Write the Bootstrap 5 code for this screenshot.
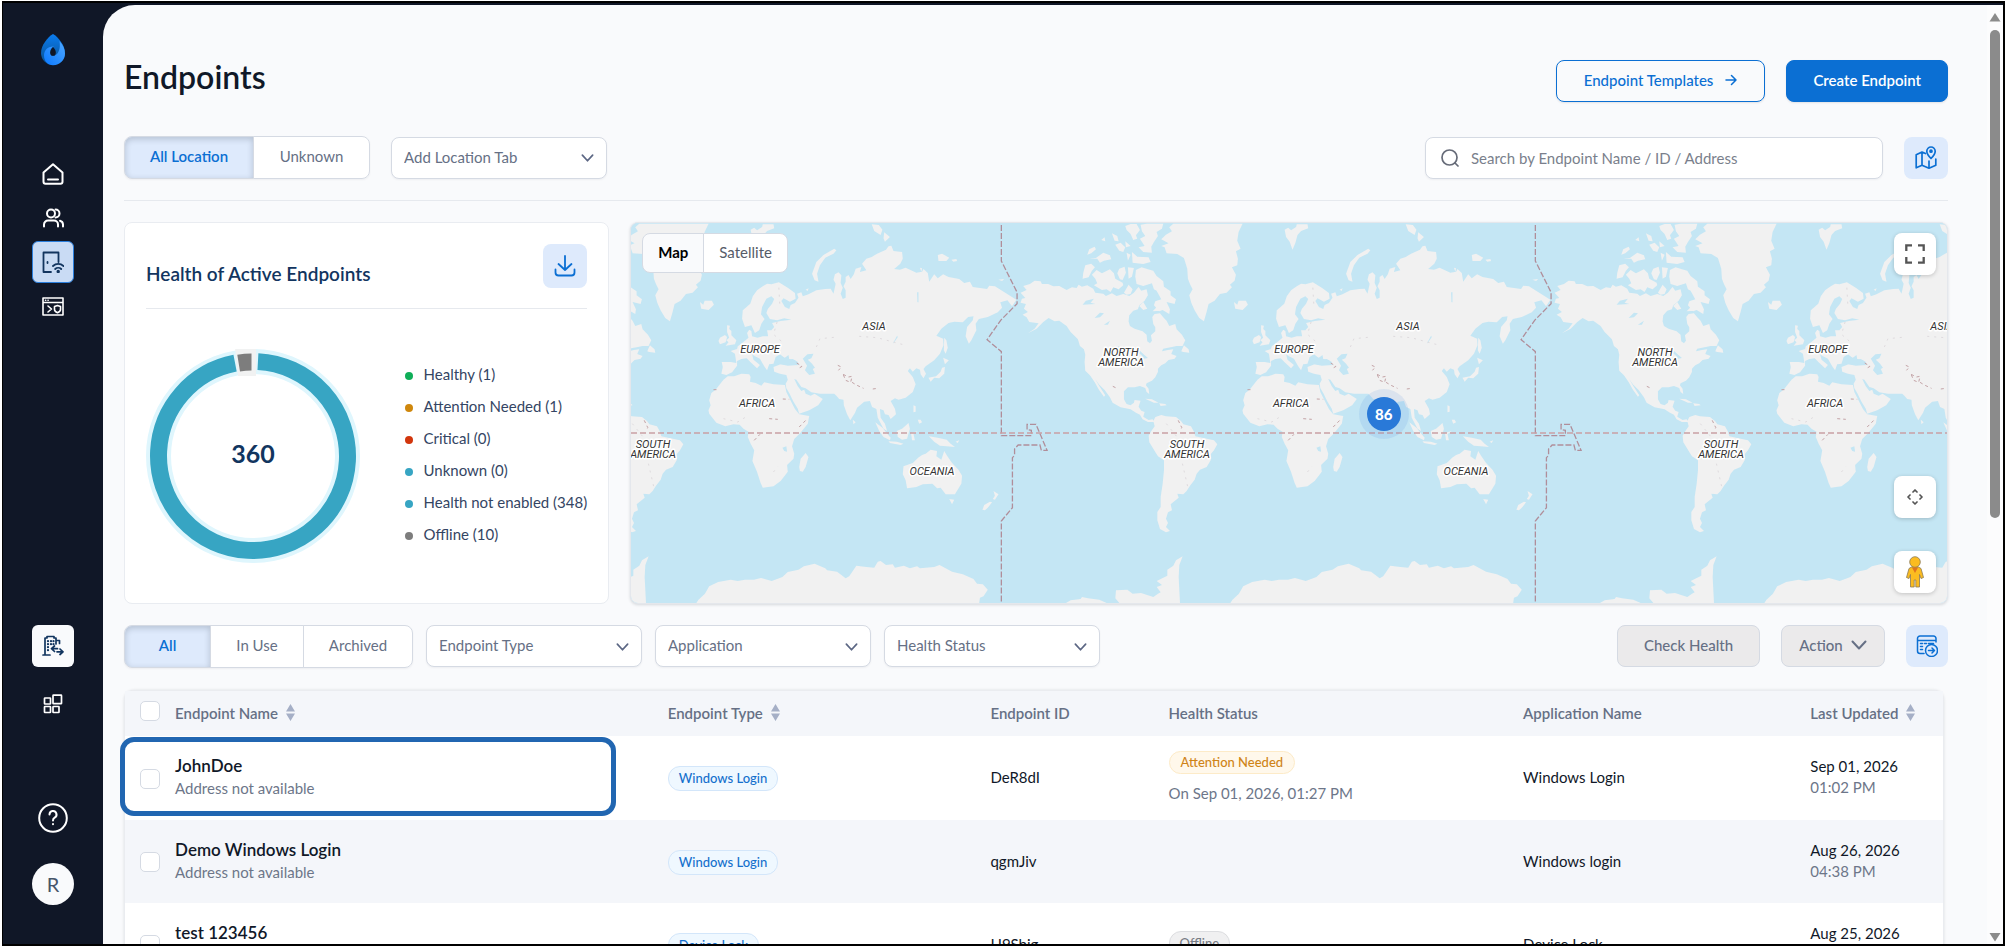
<!DOCTYPE html>
<html lang="en">
<head>
<meta charset="utf-8">
<meta name="viewport" content="width=device-width, initial-scale=1">
<title>Endpoints</title>
<link href="https://cdn.jsdelivr.net/npm/bootstrap@5.3.0/dist/css/bootstrap.min.css" rel="stylesheet">
<style>
  :root { --ink:#101828; --muted:#667085; --line:#d5dae3; --blue:#0b6fd3; --soft:#deeafc; --navy:#12355f; }
  body { font-family: Lato, "Liberation Sans", sans-serif; font-size: 15px; line-height: 20px; color: var(--ink); background: #fff; }
  .frame { height: 100vh; padding: 1px 1px 1px 2px; }
  .shell { border: 2px solid #000; background: #101727; border-left-width: 1px; }
  svg { display: block; flex: none; }
  .ico { fill: none; stroke: currentColor; stroke-width: 2; stroke-linecap: round; stroke-linejoin: round; }

  .side { width: 100px; padding: 31px 0 39px; color: #fff; }
  .side a { width: 42px; height: 42px; border-radius: 6px; color: #fff; display: flex; align-items: center; justify-content: center; }
  .side .here { background: #c9dbf4; border: 1px solid #2b7fdd; color: var(--navy); }
  .side .tile { background: #f9fafc; color: var(--navy); }
  .side .face { background: #f9fafc; border-radius: 50%; color: #475569; font-size: 20px; text-decoration: none; }
  .gap-nav { gap: 2px; margin-top: 87px; }

  .page { background: #f9fafc; border-top-left-radius: 32px; margin-top: 2px; min-width: 0; }
  .content { padding: 53px 39px 0 21px; min-width: 0; }
  .rail { width: 16px; background: #fcfcfd; padding: 7px 0 2px; }
  .rail .thumb { width: 10px; height: 488px; border-radius: 5px; background: #8b8b8b; margin-top: 8px; }
  h1 { font-size: 32px; line-height: 38px; font-weight: 600; }

  .btn { --bs-btn-font-size: 15px; --bs-btn-line-height: 20px; --bs-btn-border-radius: 8px; --bs-btn-font-weight: 500; white-space: nowrap; }
  .h42 { height: 42px; padding-top: 0; padding-bottom: 0; }
  .btn-line { border-color: var(--blue); color: var(--blue); padding: 0 27px 2px; gap: 12px; box-shadow: 0 1px 2px #1018281a; }
  .btn-full { background: var(--blue); border-color: var(--blue); color: #fff; padding: 0 26px 2px; font-weight: 600; box-shadow: 0 1px 2px #1018281a; }
  .btn-soft { background: var(--soft); color: var(--blue); padding: 0; width: 44px; display: flex; align-items: center; justify-content: center; }
  .btn-off, .btn-off:disabled { background: #ebeaeb; border-color: var(--line); color: #667085; opacity: 1; padding-bottom: 2px; }
  .seg { border-radius: 8px; box-shadow: 0 1px 2px #1018280d; }
  .seg .btn { background: #fff; border-color: var(--line); color: var(--muted); height: 43px; padding-top: 0; padding-bottom: 4px; font-weight: 400; }
  .seg .btn.on { background: var(--soft); color: var(--blue); font-weight: 600; box-shadow: inset 0 2px 6px #10182833; }
  .pick { width: 216px; height: 42px; font-size: 15px; line-height: 20px; padding: 0 40px 2px 12px; border-color: var(--line); border-radius: 8px; color: var(--muted); box-shadow: 0 1px 2px #1018280d;
    background-image: url("data:image/svg+xml,%3csvg xmlns='http://www.w3.org/2000/svg' viewBox='0 0 16 16'%3e%3cpath fill='none' stroke='%235c6784' stroke-width='1.8' stroke-linecap='round' stroke-linejoin='round' d='m2.5 5.5 5.5 6 5.5-6'/%3e%3c/svg%3e"); background-size: 15px 15px; background-position: right 11px center; }
  .find { width: 458px; height: 42px; background: #fff; border: 1px solid var(--line); border-radius: 8px; padding: 0 15px; color: #666b78; box-shadow: 0 1px 2px #1018280d; }
  .find input { font-size: 15px; line-height: 20px; }
  .find input::placeholder { color: #7a7f8c; }
  .rule { border-top: 1px solid #e6e9ee; }

  .panels { gap: 21px; }
  .health { flex: 0 0 26.6%; min-width: 440px; background: #fff; border: 1px solid #e9ecf1; border-radius: 8px; padding: 21px 21px 0; }
  .health h2 { font-size: 19px; line-height: 24px; font-weight: 600; color: var(--navy); }
  .legend { gap: 12px; font-size: 15px; color: #344563; }
  .legend li { gap: 11px; }
  .dot { width: 8px; height: 8px; border-radius: 50%; margin-top: 3px; }
  .mapbox { background: #c4e6f4; border-radius: 8px; height: 382px; box-shadow: 0 1px 3px #10182826; border: 1px solid #e4e7ec; min-width: 0; }
  .mapbox text { font-family: Roboto, "Liberation Sans", sans-serif; font-style: italic; font-size: 11px; fill: #333; text-anchor: middle; paint-order: stroke; stroke: #fff; stroke-width: 3px; stroke-linejoin: round; }
  .kind { top: 10px; left: 11px; }
  .kind .btn { background: #fff; border: 1px solid var(--line); height: 40px; padding: 0 15px 2px; color: #565c68; font-weight: 400; }
  .kind .btn.on { background: #f9fafc; color: #000; font-weight: 700; }
  .tools { top: 10px; right: 11px; bottom: 10px; width: 42px; }
  .tools .btn { width: 42px; height: 42px; padding: 0; background: #fff; border: 0; box-shadow: 0 1px 4px #0003; display: flex; align-items: center; justify-content: center; color: #555; }
  .pin { left: 57.2%; top: 50.3%; width: 34px; height: 34px; border-radius: 50%; background: #2979d8; color: #fff; border: 0; font-weight: 900; box-shadow: 0 0 0 8px #2979d81c; padding: 0; }

  .grid-card { margin-right: 4px; border: 1px solid #eaecf0; border-bottom: 0; border-radius: 10px 10px 0 0; box-shadow: 0 0 3px #1018281f; background: #fff; }
  .list { table-layout: fixed; width: 100%; }
  .list th { height: 45px; background: #f4f6fa; color: var(--muted); font-weight: 600; padding-bottom: 3px; }
  .list th .form-check-input { margin-bottom: 3px; }
  .list td { height: 83px; padding-bottom: 3px; }
  .list td:nth-child(1), .list td:nth-child(3) { padding-bottom: 0; }
  .list tbody tr:nth-child(even) td { background: #f4f6fa; }
  .list tbody tr:first-child td { height: 84px; }
  .list .form-check-input { width: 20px; height: 20px; border-radius: 5px; border-color: var(--line); margin: 0 0 0 14px; display: block; background-color: #fff; }
  .list thead .form-check-input { margin-bottom: 3px; }
  .nm { font-size: 17px; font-weight: 600; color: var(--ink); line-height: 22px; }
  .sub { color: #6d7689; line-height: 22px; }
  .pill { display: inline-block; font-size: 13px; line-height: 18px; font-weight: 500; border-radius: 12px; padding: 2px 10px 3px; border: 1px solid #d3e6fa; background: #eff8ff; color: #1570cd; }
  .pill.warm { background: #fff8eb; border-color: #fdebc8; color: #cf8416; padding: 1px 11px 2px; }
  .pill.cold { background: #f0f0f1; border-color: #dcdde0; color: #777b84; }
  .ring { left: -5px; top: 46px; width: 27.3%; height: 79px; border: 5px solid #2166b1; border-radius: 14px; pointer-events: none; }
</style>
</head>
<body>
<div class="frame">
<div class="shell d-flex h-100 overflow-hidden">

  <nav class="side d-flex flex-column align-items-center flex-shrink-0" aria-label="Main">
    <svg width="24" height="32" viewBox="0 0 24 32" aria-label="Logo">
      <defs>
        <linearGradient id="lg1" x1="0" y1="0" x2="0" y2="1"><stop offset="0" stop-color="#0a7cf0"/><stop offset="1" stop-color="#0a4f8c"/></linearGradient>
        <linearGradient id="lg2" x1="0" y1="1" x2="1" y2="0"><stop offset="0" stop-color="#0a78ff"/><stop offset="1" stop-color="#4fa8ff"/></linearGradient>
      </defs>
      <path fill="url(#lg1)" d="M12 0C17 3 24 11 24 19A12 12 0 0 1 0 19C0 11 7 3 12 0Z"/>
      <path fill="url(#lg2)" d="M18.500 7C22 11 24 15 24 19.500A12 11.700 0 0 1 12 31.200C7 31.200 3 27.500 3 21.500C3 16 7 12 13 12.500C8.500 14 8 21.500 12 22C17 21.500 20 15 18.500 7Z"/>
      <path fill="#101727" d="M12 13C14 15 14.800 16.800 14.800 18.400A2.800 3.400 0 0 1 9.200 18.400C9.200 16.800 10 15 12 13Z"/>
    </svg>
    <div class="d-flex flex-column gap-nav">
      <a href="#" aria-label="Home"><svg class="ico" width="22" height="22" viewBox="0 0 22 22"><path d="M1.500 9.500 11 1.200l9.500 8.300v9.300a2 2 0 0 1-2 2h-15a2 2 0 0 1-2-2zM6 16.500h10"/></svg></a>
      <a href="#" aria-label="Users"><svg class="ico" width="21" height="20" viewBox="0 0 21 20"><circle cx="8" cy="5.500" r="4"/><path d="M12.500 1.500a4 4 0 0 1 0 8M1 18.500v-2a4 4 0 0 1 4-4h6a4 4 0 0 1 4 4v2M17 12.800a4 4 0 0 1 3 3.700v2"/></svg></a>
      <a href="#" class="here" aria-label="Endpoints"><svg class="ico" width="22" height="22" viewBox="0 0 22 22" style="stroke-width:1.800"><path d="M9 21H1.500V1.500h15V11M5.500 11v1"/><path d="M11 15a7.500 7.500 0 0 1 10.500 0M13.200 18a4.300 4.300 0 0 1 6 0"/><circle cx="16.200" cy="20.500" r=".8"/></svg></a>
      <a href="#" aria-label="Console"><svg class="ico" width="22" height="19" viewBox="0 0 22 19" style="stroke-width:1.600"><path d="M1 1h20v17H1zM1 5.500h20M3.500 3.300h.2M6 3.300h.2M6 9l3.500 3L6 15M12.500 9.500l3-1 3 1v3c0 1.500-1.500 2.600-3 3.200-1.500-.6-3-1.700-3-3.200z"/></svg></a>
    </div>
    <div class="mt-auto d-flex flex-column">
      <a href="#" class="tile" aria-label="Switch organisation"><svg class="ico" width="22" height="22" viewBox="0 0 22 22" style="stroke-width:1.700"><path d="M3 20V3h2V1.500h7V3h2v6M1 20h7M14 5.500h3.500v3"/><path d="M6 6v.2M9 6v.2M11.500 6v.2M6 9v.2M9 9v.2M11.500 9v.2M6 12v.2M6 15v.2" stroke-width="2.200"/><path d="m12.500 11-3 2.700 3 2.800M10 13.700h5.500M18 14l3 2.800-3 2.700M20.500 16.800H15"/></svg></a>
      <a href="#" class="mt-3" aria-label="Apps"><svg class="ico" width="20" height="20" viewBox="0 0 20 20" style="stroke-width:1.700"><rect x="1.500" y="4" width="6" height="6" rx=".5"/><rect x="1.500" y="12.500" width="6" height="6" rx=".5"/><rect x="10" y="12.500" width="6" height="6" rx=".5"/><rect x="10" y="1.200" width="8.500" height="8.500" rx=".5"/></svg></a>
      <a href="#" style="margin-top:72px" aria-label="Help"><svg class="ico" width="30" height="30" viewBox="0 0 30 30"><circle cx="15" cy="15" r="13.800"/><path d="M11.500 11.500a3.500 3.500 0 1 1 5.200 3.100c-1.200.7-1.700 1.300-1.700 2.900M15 21v.3"/></svg></a>
      <a href="#" class="face mt-4">R</a>
    </div>
  </nav>

  <div class="page d-flex flex-grow-1 overflow-hidden">
  <main class="content flex-grow-1">
    <div class="d-flex justify-content-between">
      <h1 class="mb-0">Endpoints</h1>
      <div class="d-flex" style="gap:21px;margin-top:2px">
        <button class="btn btn-line h42 d-flex align-items-center">Endpoint Templates
          <svg class="ico" width="12" height="12" viewBox="0 0 12 12" style="stroke-width:1.500"><path d="M1 6h10M6.500 1.500 11 6l-4.500 4.500"/></svg></button>
        <button class="btn btn-full h42">Create Endpoint</button>
      </div>
    </div>

    <div class="d-flex align-items-center" style="margin-top:34px">
      <div class="btn-group seg" role="group" aria-label="Location">
        <button class="btn on" style="width:130px">All Location</button>
        <button class="btn" style="width:117px">Unknown</button>
      </div>
      <select class="form-select pick" style="margin-left:21px" aria-label="Add Location Tab"><option>Add Location Tab</option></select>
      <label class="find d-flex align-items-center ms-auto">
        <svg class="ico" width="18" height="18" viewBox="0 0 18 18" style="stroke-width:1.700"><circle cx="8.500" cy="8.500" r="7.500"/><path d="m14 14 3 3"/></svg>
        <input type="search" class="border-0 bg-transparent flex-grow-1 ms-2 p-0 ps-1" placeholder="Search by Endpoint Name / ID / Address" aria-label="Search">
      </label>
      <button class="btn btn-soft h42" style="margin-left:21px" aria-label="Toggle map"><svg class="ico" width="22" height="24" viewBox="0 0 22 24" style="stroke-width:1.700"><path d="M10.500 7.500 7 6 1.200 8.800v13l5.800-2.600 7 3 6.800-3V13M7 6.200v13M14 15v7"/><path d="M16 1a4.200 4.200 0 0 1 4.200 4.200c0 3-4.200 7.300-4.200 7.300s-4.200-4.300-4.200-7.300A4.200 4.200 0 0 1 16 1z"/><circle cx="16" cy="5.200" r="1"/></svg></button>
    </div>
    <div class="rule" style="margin-top:21px"></div>

    <div class="panels d-flex" style="margin-top:21px">
      <section class="health d-flex flex-column">
        <div class="d-flex justify-content-between align-items-center" style="padding-bottom:20px">
          <h2 class="mb-0 pt-3">Health of Active Endpoints</h2>
          <button class="btn btn-soft" style="height:44px" aria-label="Download"><svg class="ico" width="22" height="22" viewBox="0 0 22 22" style="stroke-width:1.800"><path d="M11 1v14M4.500 9l6.500 6 6.500-6M1.500 14.500v3a3 3 0 0 0 3 3h13a3 3 0 0 0 3-3v-3"/></svg></button>
        </div>
        <div class="rule"></div>
        <div class="d-flex align-items-center justify-content-between" style="margin-top:40px">
          <svg width="214" height="214" viewBox="-107 -107 214 214" role="img" aria-label="360 endpoints">
            <circle r="94.500" fill="none" stroke="#dff6fd" stroke-width="25"/>
            <path d="M-18-108H3V-80H-15Z" fill="#f1f2f2"/>
            <circle r="94.500" fill="none" stroke="#37a5c3" stroke-width="17" pathLength="360" stroke-dasharray="346 14" transform="rotate(-87)"/>
            <path d="M-15.700-101.300A102.500 102.500 0 0 1-1.500-102.500V-85.500A85.500 85.500 0 0 0-13-84.500Z" fill="#7d7d7d"/>
            <text y="7" text-anchor="middle" font-size="25" font-weight="700" fill="#12355f">360</text>
          </svg>
          <ul class="legend list-unstyled d-flex flex-column mb-1">
            <li class="d-flex align-items-center"><span class="dot" style="background:#0fae58"></span>Healthy (1)</li>
            <li class="d-flex align-items-center"><span class="dot" style="background:#cf870c"></span>Attention Needed (1)</li>
            <li class="d-flex align-items-center"><span class="dot" style="background:#d2360c"></span>Critical (0)</li>
            <li class="d-flex align-items-center"><span class="dot" style="background:#37a5c3"></span>Unknown (0)</li>
            <li class="d-flex align-items-center"><span class="dot" style="background:#37a5c3"></span>Health not enabled (348)</li>
            <li class="d-flex align-items-center"><span class="dot" style="background:#7d7d7d"></span>Offline (10)</li>
          </ul>
        </div>
      </section>

      <section class="mapbox flex-grow-1 position-relative overflow-hidden">
        <svg class="w-100 h-100" viewBox="0 0 1316 380" preserveAspectRatio="xMinYMid slice" role="img" aria-label="World map">
          <defs>
            <g id="world">
              <g transform="scale(.35714 .33333) translate(-31 -38)">
                <g fill="#f1f1f1">
                  <path d="M285 455 L310 455 L326 458 L322 430 L310 422 L328 416 L330 408 L345 396 L360 382 L356 368 L362 358 L368 362 L370 378 L385 382 L400 378 L415 378 L412 360 L424 360 L432 350 L426 338 L450 332 L480 328 L460 324 L440 330 L420 326 L410 308 L414 296 L426 280 L432 266 L424 258 L410 265 L398 290 L395 312 L405 326 L396 340 L390 360 L378 368 L368 345 L350 350 L342 325 L344 300 L365 280 L372 258 L384 240 L400 228 L412 220 L424 222 L445 216 L470 232 L490 248 L492 265 L476 274 L458 264 L452 272 L462 290 L474 296 L478 284 L490 278 L500 262 L496 250 L508 246 L512 258 L528 252 L550 240 L575 236 L590 235 L598 250 L604 220 L598 208 L602 192 L612 186 L620 195 L618 218 L624 232 L618 250 L624 266 L632 262 L632 240 L626 228 L632 214 L632 200 L640 194 L646 206 L655 192 L660 175 L676 170 L672 185 L690 180 L678 160 L690 145 L705 140 L720 130 L745 118 L752 108 L760 106 L766 122 L790 125 L792 145 L785 160 L768 176 L784 178 L800 172 L830 187 L846 184 L850 176 L862 188 L866 214 L880 192 L890 204 L905 192 L920 200 L950 206 L964 218 L980 214 L988 230 L1028 236 L1034 226 L1050 228 L1080 248 L1110 268 L1098 288 L1085 270 L1065 276 L1070 292 L1058 306 L1030 320 L1005 326 L996 340 L998 360 L984 390 L977 400 L968 378 L972 350 L988 330 L990 318 L975 320 L960 336 L936 334 L920 338 L900 355 L886 376 L905 385 L906 405 L896 430 L880 450 L866 460 L856 468 L850 476 L857 490 L850 504 L842 492 L840 478 L830 474 L820 484 L812 474 L806 482 L820 500 L828 522 L820 545 L800 562 L780 568 L770 564 L758 572 L770 595 L773 612 L758 626 L752 614 L742 612 L738 600 L728 596 L730 622 L742 640 L748 662 L738 655 L722 622 L718 596 L706 590 L700 572 L684 574 L664 592 L658 608 L645 630 L636 612 L627 585 L626 568 L614 566 L606 556 L600 550 L560 550 L536 546 L520 534 L508 530 L494 508 L488 506 L498 528 L508 542 L516 538 L520 550 L534 556 L545 550 L568 566 L555 585 L530 600 L502 610 L498 595 L486 574 L474 548 L466 534 L464 520 L470 508 L466 494 L448 490 L432 484 L430 470 L450 462 L470 466 L500 464 L498 455 L484 446 L470 448 L458 440 L448 432 L436 440 L430 460 L418 462 L412 480 L404 468 L392 445 L378 438 L370 432 L374 448 L392 464 L384 474 L366 456 L355 444 L340 446 L328 452 L328 466 L314 486 L298 494 L284 490 L288 470 Z"/>
                  <path d="M290 508 L302 498 L320 498 L340 490 L362 492 L366 500 L364 514 L380 518 L396 526 L404 516 L430 522 L462 524 L466 545 L480 575 L490 596 L502 612 L530 617 L526 640 L505 668 L488 686 L482 708 L488 730 L486 745 L468 764 L470 784 L450 812 L430 828 L400 832 L394 818 L384 785 L371 752 L376 720 L366 700 L358 680 L360 664 L346 655 L335 643 L318 642 L295 648 L270 637 L250 610 L248 600 L254 585 L250 570 L256 548 L268 538 L280 522Z"/>
                  <path d="M502 770 L506 745 L520 728 L528 740 L520 770 L512 784 L504 782Z M715 636 L735 652 L758 682 L756 690 L738 680 L726 662Z M752 693 L775 694 L794 700 L786 704 L756 698Z M775 662 L790 655 L808 638 L812 655 L804 685 L790 688 L778 680Z M822 585 L828 588 L828 604 L822 606Z M834 628 L842 628 L846 636 L838 640Z M815 668 L834 662 L822 672 L826 690 L818 690Z M865 678 L890 682 L915 688 L926 700 L938 710 L915 708 L896 706 L880 694Z M940 694 L950 690 L946 698Z"/>
                  <path d="M794 768 L820 758 L835 742 L846 734 L856 730 L870 718 L888 722 L886 738 L900 748 L908 722 L916 736 L930 758 L948 778 L958 796 L956 820 L938 852 L912 852 L898 832 L888 834 L875 820 L848 822 L830 830 L804 834 L800 810 L792 792Z M922 866 L936 868 L930 882Z M1046 842 L1060 852 L1050 868 L1044 866 L1050 856Z M1015 898 L1020 884 L1036 874 L1042 876 L1030 892 L1022 900Z"/>
                  <path d="M864 502 L885 498 L898 484 L902 472 L910 470 L908 490 L894 504 L880 502 L870 514Z M905 442 L921 450 L910 462Z M908 382 L914 390 L918 412 L912 430 L907 420Z"/>
                  <path d="M300 345 L308 346 L306 356 L312 362 L312 375 L326 390 L322 402 L296 406 L304 396 L298 390 L306 382 L300 365Z M280 382 L294 374 L300 380 L296 396 L280 402 L276 392Z"/>
                  <path d="M545 210 L538 190 L550 155 L570 134 L600 115 L606 120 L598 130 L575 142 L560 165 L552 190 L556 214Z M366 58 L376 52 L384 60 L398 50 L400 42 L430 42 L432 54 L412 62 L402 74 L396 98 L388 118 L380 94 L370 80Z M705 42 L725 44 L735 58 L730 74 L712 62Z M740 66 L756 80 L742 94 L738 84Z M890 134 L902 130 L922 142 L914 152 L892 152Z M928 148 L942 146 L944 152 L934 154Z M1060 208 L1076 206 L1070 212Z M840 172 L846 174 L844 184Z M652 628 L660 636 L654 642Z M520 238 L528 234 L526 242Z"/>
                  <path d="M214 1178 L220 1168 L238 1150 L250 1128 L275 1115 L310 1108 L330 1112 L350 1108 L375 1108 L395 1103 L425 1112 L455 1100 L470 1085 L500 1078 L515 1068 L545 1060 L575 1074 L580 1080 L608 1084 L632 1104 L642 1098 L662 1066 L690 1070 L712 1072 L722 1054 L730 1052 L745 1064 L764 1062 L770 1072 L795 1066 L812 1074 L832 1068 L840 1074 L880 1070 L895 1064 L930 1084 L960 1092 L990 1106 L1000 1120 L1016 1122 L1030 1138 L1018 1158 L1008 1162 L1006 1178Z"/>
                </g>
                <g fill="#c4e6f4">
                  <path d="M512 445 L525 432 L542 430 L536 444 L526 448 L538 460 L546 472 L540 476 L546 490 L530 494 L518 480 L524 466Z M440 460 L436 448 L448 436 L460 444 L472 434 L474 446 L490 450 L500 462 L470 464Z M764 400 L776 376 L778 380 L768 396Z M832 246 L836 246 L836 276 L833 276Z M455 712 L466 708 L468 724 L460 722Z"/>
                </g>
                <g transform="translate(1064 15) scale(.93333 1)">
                  <path fill="#f1f1f1" d="M62 232 L80 224 L70 212 L90 206 L104 196 L122 198 L126 206 L145 206 L160 213 L178 212 L200 224 L216 216 L230 218 L236 208 L246 214 L262 210 L280 220 L286 232 L310 235 L318 242 L336 234 L350 242 L370 236 L388 242 L402 232 L410 222 L416 215 L424 226 L440 222 L444 240 L434 256 L418 270 L414 282 L400 286 L388 300 L386 318 L390 332 L404 340 L428 348 L440 358 L442 378 L450 384 L456 376 L453 360 L466 348 L466 336 L460 326 L457 305 L464 296 L480 294 L490 306 L500 316 L508 332 L526 326 L530 342 L546 358 L556 375 L548 392 L530 392 L512 396 L490 400 L486 408 L504 404 L520 402 L514 416 L530 422 L524 430 L506 434 L496 444 L484 450 L474 460 L474 470 L466 486 L456 496 L440 504 L438 510 L446 520 L448 536 L440 530 L436 518 L420 512 L404 516 L384 516 L372 528 L372 552 L380 566 L392 570 L402 562 L404 554 L422 556 L416 574 L424 586 L434 590 L430 604 L446 614 L458 612 L464 620 L444 620 L428 612 L420 598 L408 592 L392 582 L362 576 L338 562 L330 546 L314 524 L298 508 L286 492 L298 512 L316 540 L312 544 L296 522 L284 500 L270 480 L256 466 L254 440 L256 418 L252 402 L240 392 L234 372 L212 350 L200 332 L178 316 L164 318 L146 308 L130 320 L110 340 L84 354 L104 340 L116 324 L88 320 L80 306 L68 298 L84 290 L72 280 L78 266 L62 262 L66 250 L76 248Z
                    M256 150 L274 145 L285 156 L276 166 L266 186 L248 190 L250 172Z M276 178 L290 164 L306 174 L330 162 L342 174 L346 190 L368 202 L370 210 L356 222 L340 216 L332 230 L320 222 L306 224 L282 210 L292 204 L286 190Z M262 118 L268 102 L284 94 L288 102 L274 114Z M268 130 L288 128 L310 112 L330 120 L334 132 L312 136 L300 142 L292 130Z M304 74 L314 66 L316 78Z M336 54 L352 62 L356 78 L344 76Z M346 88 L362 82 L376 96 L370 110 L358 106Z M376 78 L392 92 L378 96Z M380 112 L392 118 L384 136Z M376 32 L392 26 L410 26 L420 44 L408 60 L412 70 L400 74 L392 56 L380 44Z M422 28 L440 25 L490 25 L486 40 L470 50 L474 62 L462 80 L454 94 L456 112 L430 110 L416 96 L434 92 L420 70 L436 62 L426 48Z M396 110 L412 124 L446 126 L452 140 L430 146 L398 142Z M358 160 L374 154 L378 172 L368 194 L360 192 L352 174Z M384 156 L402 158 L396 184 L386 190Z M372 232 L386 208 L398 222 L392 236 L380 238Z M408 164 L425 156 L444 162 L460 166 L470 182 L490 198 L492 214 L512 228 L512 240 L528 252 L524 266 L500 260 L510 282 L508 296 L488 284 L478 288 L462 270 L466 258 L484 252 L470 226 L462 222 L456 204 L430 212 L410 206 L406 184Z M418 272 L430 260 L442 280 L430 284Z M458 288 L470 276 L480 286Z
                    M520 25 L728 25 L716 50 L712 76 L722 100 L708 108 L714 130 L712 150 L696 156 L708 178 L704 196 L690 208 L696 216 L680 232 L660 236 L644 256 L626 266 L620 290 L612 318 L598 308 L584 285 L574 262 L568 240 L578 222 L570 206 L564 190 L562 160 L552 128 L532 116 L500 114 L494 96 L484 92 L506 84 L484 72 L498 58 L516 48 L508 36Z
                    M702 260 L712 268 L716 256 L738 256 L744 268 L728 284 L706 280Z M544 408 L552 390 L566 402 L568 412 L550 410Z M436 550 L456 552 L476 562 L462 562Z M478 564 L496 566 L500 570 L482 572Z"/>
                  <path fill="#c4e6f4" d="M248 268 L258 256 L282 250 L272 262 L286 266Z M284 308 L300 292 L312 294 L300 306Z M312 328 L330 316 L324 328Z M412 412 L420 406 L430 416 L444 428 L432 430 L424 418Z M354 392 L360 394 L360 408Z"/>
                </g>
                <g transform="translate(1249 0) scale(.93333 1)">
                  <path fill="#f1f1f1" d="M262 632 L268 620 L286 614 L300 618 L330 620 L345 632 L352 642 L375 648 L384 664 L388 678 L408 682 L444 690 L454 702 L444 720 L434 732 L434 750 L422 770 L402 778 L392 790 L386 808 L372 826 L362 842 L352 852 L334 850 L338 862 L314 882 L318 900 L306 906 L300 925 L306 938 L300 950 L312 962 L300 966 L282 956 L274 930 L274 905 L284 890 L284 860 L290 820 L294 780 L294 750 L276 738 L266 722 L250 696 L248 676 L256 662 L266 648Z
                    M0 1178 L14 1170 L44 1166 L48 1160 L66 1164 L100 1168 L122 1178Z M160 1178 L148 1164 L150 1140 L184 1138 L200 1150 L225 1148 L262 1160 L276 1150 L284 1146 L272 1130 L288 1124 L272 1112 L304 1096 L304 1078 L322 1066 L330 1050 L350 1038 L340 1064 L338 1100 L342 1178Z"/>
                </g>
                <g fill="none" stroke="#c3a3a6" stroke-width="1" stroke-dasharray="3 3">
                  <path vector-effect="non-scaling-stroke" d="M610 465 L620 470 L612 480 M625 492 L640 500 L650 498 L646 516 L632 510Z M650 516 L662 524 L682 534 M708 536 L722 534 M495 458 L510 468 L500 474 M456 566 L474 567 M418 625 L442 627 M502 650 L524 626 M68 630 L78 652 L74 660 M376 690 L392 672 M262 538 L278 538 M1380 528 L1392 534"/>
                </g>
                <g fill="none" stroke="#dfdbde" stroke-width="1" stroke-dasharray="2 5">
                  <path vector-effect="non-scaling-stroke" d="M445 232 L448 290 M440 335 L430 372 L460 400 M550 410 L560 385 L610 380 M670 378 L720 382 L800 405 M290 625 L330 635 L360 615 M1530 640 L1560 680 M1575 760 L1590 830 M430 785 L442 768"/>
                </g>
                <path vector-effect="non-scaling-stroke" fill="none" stroke="#b08e9a" stroke-width="1.300" stroke-dasharray="6 2" d="M1068 44 V152 L1112 246 V280 L1066 330 L1028 388 L1068 424 V676 H1152 V660 L1140 658 V642 H1165 L1196 720 H1180 L1176 704 H1115 L1105 716 V735 L1099 742 V892 L1068 932 V1178"/>
              </g>
              <text x="243" y="107">ASIA</text>
              <text x="129" y="130">EUROPE</text>
              <text x="126" y="184">AFRICA</text>
              <text x="301" y="252">OCEANIA</text>
              <text x="490" y="133">NORTH</text><text x="490" y="143">AMERICA</text>
              <text x="556" y="225">SOUTH</text><text x="556" y="235">AMERICA</text>
            </g>
          </defs>
          <rect width="1316" height="380" fill="#c4e6f4"/>
          <use href="#world" x="-534"/>
          <use href="#world"/>
          <use href="#world" x="534"/>
          <use href="#world" x="1068"/>
          <path d="M0 210H1316" stroke="#c9a0a4" stroke-width="1.500" stroke-dasharray="6 3"/>
        </svg>
        <button class="pin position-absolute translate-middle">86</button>
        <div class="btn-group kind position-absolute" role="group" aria-label="Map type">
          <button class="btn on">Map</button>
          <button class="btn">Satellite</button>
        </div>
        <div class="tools position-absolute d-flex flex-column">
          <button class="btn mb-auto" aria-label="Full screen"><svg width="20" height="20" viewBox="0 0 20 20" fill="none" stroke="currentColor" stroke-width="2.300"><path d="M1.300 7V1.300H7M13 1.300h5.700V7M18.700 13v5.700H13M7 18.700H1.300V13"/></svg></button>
          <button class="btn" style="margin-bottom:33px" aria-label="Camera controls"><svg class="ico" width="16" height="16" viewBox="0 0 16 16" style="stroke-width:1.700"><path d="m6 3 2-2 2 2M6 13l2 2 2-2M3 6 1 8l2 2M13 6l2 2-2 2"/></svg></button>
          <button class="btn" aria-label="Street View"><svg width="18" height="32" viewBox="0 0 18 32" fill="#fbbc20" stroke="#8b7a55" stroke-width=".8"><path d="M5.500 11h7l2.500 1.500 2.500 9-2.500 1-1.500-4v12.500H9.800V24H8.200v7H4.500V18.500l-1.500 4-2.500-1L3 12.500z"/><circle cx="9" cy="6" r="5.300"/><path d="M6 11.500h6L9 17z" fill="#e0741f" stroke="none"/></svg></button>
        </div>
      </section>
    </div>

    <div class="d-flex align-items-start" style="margin-top:21px">
      <div class="btn-group seg" role="group" aria-label="State">
        <button class="btn on" style="width:87px">All</button>
        <button class="btn" style="width:94px">In Use</button>
        <button class="btn" style="width:110px">Archived</button>
      </div>
      <select class="form-select pick" style="margin-left:13px" aria-label="Endpoint Type"><option>Endpoint Type</option></select>
      <select class="form-select pick" style="margin-left:13px" aria-label="Application"><option>Application</option></select>
      <select class="form-select pick" style="margin-left:13px" aria-label="Health Status"><option>Health Status</option></select>
      <div class="d-flex ms-auto" style="gap:21px">
        <button class="btn btn-off h42 px-4" disabled style="width:143px">Check Health</button>
        <button class="btn btn-off h42 d-flex align-items-center justify-content-center" disabled style="width:104px">Action
          <svg class="ico ms-2" width="16" height="16" viewBox="0 0 16 16"><path d="m1.500 4.500 6.500 7 6.500-7"/></svg></button>
        <button class="btn btn-soft h42" style="width:42px" aria-label="Export"><svg class="ico" width="22" height="22" viewBox="0 0 22 22" style="stroke-width:1.500"><path d="M8 18.500H4a2.500 2.500 0 0 1-2.500-2.500V3.500A2.500 2.500 0 0 1 4 1h13.500A2.500 2.500 0 0 1 20 3.500V7M1.500 5.500H20M4.500 8.500h2M8.500 8.500h2M12.500 8.500h5M4.500 11.500h2M4.500 14.500h2"/><circle cx="15.500" cy="15.500" r="6"/><path d="M12.500 15.500h6M16 13l2.500 2.500L16 18"/></svg></button>
      </div>
    </div>

    <div class="grid-card position-relative" style="margin-top:22px">
      <table class="list">
        <colgroup><col style="width:2.700%"><col style="width:27.100%"><col style="width:17.750%"><col style="width:9.800%"><col style="width:19.500%"><col style="width:15.800%"><col></colgroup>
        <thead>
          <tr>
            <th><input class="form-check-input" type="checkbox" aria-label="Select all"></th>
            <th><span class="d-flex align-items-center gap-2">Endpoint Name <svg width="9" height="17" viewBox="0 0 9 17" fill="#a5afc6"><path d="M4.500 0 9 7.500H0zM0 9.500h9L4.500 17z"/></svg></span></th>
            <th><span class="d-flex align-items-center gap-2">Endpoint Type <svg width="9" height="17" viewBox="0 0 9 17" fill="#a5afc6"><path d="M4.500 0 9 7.500H0zM0 9.500h9L4.500 17z"/></svg></span></th>
            <th>Endpoint ID</th>
            <th>Health Status</th>
            <th>Application Name</th>
            <th><span class="d-flex align-items-center gap-2">Last Updated <svg width="9" height="17" viewBox="0 0 9 17" fill="#a5afc6"><path d="M4.500 0 9 7.500H0zM0 9.500h9L4.500 17z"/></svg></span></th>
          </tr>
        </thead>
        <tbody>
          <tr>
            <td><input class="form-check-input" type="checkbox" aria-label="Select JohnDoe"></td>
            <td><div class="nm">JohnDoe</div><div class="sub">Address not available</div></td>
            <td><span class="pill">Windows Login</span></td>
            <td>DeR8dI</td>
            <td><span class="pill warm">Attention Needed</span><div class="sub mt-2">On Sep 01, 2026, 01:27 PM</div></td>
            <td>Windows Login</td>
            <td><div>Sep 01, 2026</div><div class="sub">01:02 PM</div></td>
          </tr>
          <tr>
            <td><input class="form-check-input" type="checkbox" aria-label="Select Demo Windows Login"></td>
            <td><div class="nm">Demo Windows Login</div><div class="sub">Address not available</div></td>
            <td><span class="pill">Windows Login</span></td>
            <td>qgmJiv</td>
            <td></td>
            <td>Windows login</td>
            <td><div>Aug 26, 2026</div><div class="sub">04:38 PM</div></td>
          </tr>
          <tr>
            <td><input class="form-check-input" type="checkbox" aria-label="Select test 123456"></td>
            <td><div class="nm">test 123456</div><div class="sub">&nbsp;</div></td>
            <td><span class="pill">Device Lock</span></td>
            <td>H9Sbig</td>
            <td><span class="pill cold">Offline</span></td>
            <td>Device Lock</td>
            <td><div>Aug 25, 2026</div><div class="sub">&nbsp;</div></td>
          </tr>
        </tbody>
      </table>
      <div class="ring position-absolute"></div>
    </div>
  </main>
  <div class="rail d-flex flex-column align-items-center flex-shrink-0" aria-hidden="true">
    <svg width="12" height="10" viewBox="0 0 12 10"><path d="M6 1 11.500 9.500H.5z" fill="#8b8b8b"/></svg>
    <div class="thumb"></div>
    <svg class="mt-auto" width="12" height="10" viewBox="0 0 12 10"><path d="M6 9.500 11.500 1H.5z" fill="#8b8b8b"/></svg>
  </div>
  </div>
</div>
</div>
<script src="https://cdn.jsdelivr.net/npm/bootstrap@5.3.0/dist/js/bootstrap.bundle.min.js"></script>
</body>
</html>
